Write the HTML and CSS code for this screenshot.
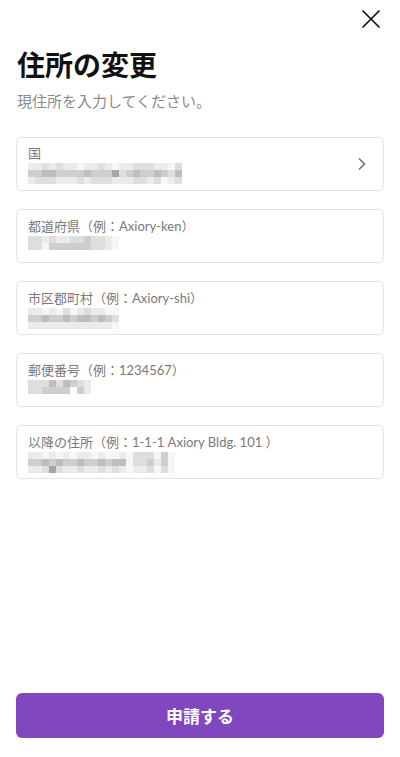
FILE: index.html
```html
<!DOCTYPE html>
<html lang="ja">
<head>
<meta charset="utf-8">
<title>住所の変更</title>
<link rel="stylesheet" href="styles.css">
</head>
<body>
<div class="page">
  <div class="topbar">
    <button class="close" aria-label="閉じる">
      <svg width="20" height="20" viewBox="0 0 20 20"><path d="M2 2 L18 18 M18 2 L2 18" stroke="#111" stroke-width="1.7" fill="none" stroke-linecap="round"/></svg>
    </button>
  </div>
  <h1 class="title">住所の変更</h1>
  <p class="subtitle">現住所を入力してください。</p>

  <div class="fields">
    <div class="field select">
      <div class="field-body">
        <div class="label">国</div>
        <div class="mosaic">
          <div class="mrow"><span class="c1"></span><span class="c1"></span><span class="c2"></span><span class="c1"></span><span class="c2"></span><span class="c1"></span><span class="c1"></span><span class="c0"></span><span class="c1"></span><span class="c1"></span><span class="c2"></span><span class="c1"></span><span class="c0"></span><span class="c1"></span><span class="c1"></span><span class="c2"></span><span class="c2"></span><span class="c2"></span><span class="c1"></span><span class="c1"></span><span class="c0"></span><span class="c2"></span></div>
          <div class="mrow"><span class="c3"></span><span class="c3"></span><span class="c4"></span><span class="c4"></span><span class="c3"></span><span class="c3"></span><span class="c3"></span><span class="c3"></span><span class="c4"></span><span class="c3"></span><span class="c3"></span><span class="c3"></span><span class="c5"></span><span class="c2"></span><span class="c3"></span><span class="c4"></span><span class="c3"></span><span class="c3"></span><span class="c4"></span><span class="c3"></span><span class="c2"></span><span class="c4"></span></div>
          <div class="mrow"><span class="c1"></span><span class="c2"></span><span class="c2"></span><span class="c2"></span><span class="c1"></span><span class="c1"></span><span class="c1"></span><span class="c2"></span><span class="c1"></span><span class="c2"></span><span class="c2"></span><span class="c2"></span><span class="c1"></span><span class="c1"></span><span class="c1"></span><span class="c2"></span><span class="c2"></span><span class="c1"></span><span class="c2"></span><span class="c0"></span><span class="c1"></span><span class="c2"></span></div>
        </div>
      </div>
      <svg class="chev" width="10" height="14" viewBox="0 0 10 14"><path d="M2 1.5 L7.5 7 L2 12.5" stroke="#666" stroke-width="1.4" fill="none"/></svg>
    </div>

    <div class="field">
      <div class="field-body">
        <div class="label">都道府県（例：Axiory-ken）</div>
        <div class="mosaic">
          <div class="mrow"><span class="c2"></span><span class="c2"></span><span class="c1"></span><span class="c2"></span><span class="c1"></span><span class="c1"></span><span class="c2"></span><span class="c2"></span><span class="c3"></span><span class="c2"></span><span class="c2"></span><span class="c1"></span><span class="c0"></span></div>
          <div class="mrow"><span class="c2"></span><span class="c2"></span><span class="c0"></span><span class="c3"></span><span class="c3"></span><span class="c3"></span><span class="c3"></span><span class="c3"></span><span class="c3"></span><span class="c2"></span><span class="c2"></span><span class="c1"></span><span class="c0"></span></div>
        </div>
      </div>
    </div>

    <div class="field">
      <div class="field-body">
        <div class="label">市区郡町村（例：Axiory-shi）</div>
        <div class="mosaic">
          <div class="mrow"><span class="c1"></span><span class="c1"></span><span class="c0"></span><span class="c1"></span><span class="c0"></span><span class="c2"></span><span class="c0"></span><span class="c1"></span><span class="c2"></span><span class="c1"></span><span class="c1"></span><span class="c0"></span><span class="c0"></span></div>
          <div class="mrow"><span class="c3"></span><span class="c3"></span><span class="c4"></span><span class="c3"></span><span class="c3"></span><span class="c4"></span><span class="c3"></span><span class="c4"></span><span class="c4"></span><span class="c3"></span><span class="c4"></span><span class="c3"></span><span class="c2"></span></div>
          <div class="mrow"><span class="c1"></span><span class="c1"></span><span class="c1"></span><span class="c1"></span><span class="c1"></span><span class="c1"></span><span class="c1"></span><span class="c1"></span><span class="c1"></span><span class="c1"></span><span class="c1"></span><span class="c1"></span><span class="c0"></span></div>
        </div>
      </div>
    </div>

    <div class="field">
      <div class="field-body">
        <div class="label">郵便番号（例：1234567）</div>
        <div class="mosaic">
          <div class="mrow"><span class="c2"></span><span class="c2"></span><span class="c2"></span><span class="c4"></span><span class="c2"></span><span class="c4"></span><span class="c3"></span><span class="c2"></span><span class="c1"></span></div>
          <div class="mrow"><span class="c2"></span><span class="c2"></span><span class="c3"></span><span class="c3"></span><span class="c3"></span><span class="c3"></span><span class="w"></span><span class="c3"></span><span class="c1"></span></div>
        </div>
      </div>
    </div>

    <div class="field">
      <div class="field-body">
        <div class="label">以降の住所（例：1-1-1 Axiory Bldg. 101 ）</div>
        <div class="mosaic">
          <div class="mrow"><span class="c1"></span><span class="c1"></span><span class="c0"></span><span class="c1"></span><span class="c0"></span><span class="c1"></span><span class="c0"></span><span class="c1"></span><span class="c1"></span><span class="c0"></span><span class="c1"></span><span class="c0"></span><span class="c0"></span><span class="c1"></span><span class="c0"></span><span class="c2"></span><span class="c2"></span><span class="c2"></span><span class="c0"></span><span class="c3"></span><span class="c0"></span></div>
          <div class="mrow"><span class="c3"></span><span class="c3"></span><span class="c4"></span><span class="c3"></span><span class="c4"></span><span class="c3"></span><span class="c3"></span><span class="c4"></span><span class="c3"></span><span class="c3"></span><span class="c4"></span><span class="c3"></span><span class="c4"></span><span class="c4"></span><span class="c0"></span><span class="c2"></span><span class="c2"></span><span class="c3"></span><span class="c1"></span><span class="c3"></span><span class="c0"></span></div>
          <div class="mrow"><span class="c1"></span><span class="c1"></span><span class="c2"></span><span class="c5"></span><span class="c2"></span><span class="c1"></span><span class="c1"></span><span class="c2"></span><span class="c1"></span><span class="c1"></span><span class="c2"></span><span class="c1"></span><span class="c2"></span><span class="c1"></span><span class="c0"></span><span class="c1"></span><span class="c1"></span><span class="c2"></span><span class="c0"></span><span class="c2"></span><span class="c0"></span></div>
        </div>
      </div>
    </div>
  </div>

  <button class="submit">申請する</button>
</div>
</body>
</html>
```

FILE: styles.css
```css
* { box-sizing: border-box; }
html, body { margin: 0; padding: 0; background: #fff; }
body {
  font-family: Lato, "Noto Sans CJK JP", sans-serif;
  color: #111;
}
.page {
  display: flex;
  flex-direction: column;
  height: 757px;
  padding: 0 16px 19px;
}
.topbar {
  height: 38px;
  display: flex;
  justify-content: flex-end;
  align-items: center;
}
.close {
  border: 0;
  background: none;
  padding: 0;
  margin-right: 3px;
  width: 20px;
  height: 20px;
  display: flex;
}
.title {
  margin: 8px 0 0 1px;
  font-family: "Noto Sans CJK JP", sans-serif;
  font-size: 28px;
  line-height: 36px;
  font-weight: 700;
  color: #111;
}
.subtitle {
  margin: 8px 0 0 1px;
  font-family: "Noto Sans CJK JP", sans-serif;
  font-size: 15px;
  line-height: 22px;
  color: #8a8a8a;
}
.fields {
  margin-top: 25px;
  display: flex;
  flex-direction: column;
  gap: 18px;
}
.field {
  height: 54px;
  border: 1px solid #e3e3e3;
  border-radius: 6px;
  padding: 7px 12px 0 11px;
  display: flex;
  align-items: flex-start;
}
.field-body { flex: 1; }
.label {
  font-size: 13px;
  line-height: 19px;
  color: #7a7a7a;
}
.mosaic { display: flex; flex-direction: column; margin-top: 0; }
.mrow { display: flex; height: 7px; }
.mrow span { width: 7px; height: 7px; }
.c0 { background: #f6f6f6; }
.c1 { background: #ebebeb; }
.c2 { background: #dedede; }
.c3 { background: #cecece; }
.c4 { background: #bdbdbd; }
.c5 { background: #a6a6a6; }
.w { background: #fff; }
.select { align-items: center; padding-top: 0; }
.select .field-body { padding-top: 0; }
.chev { margin-right: 4px; }
.submit {
  margin-top: auto;
  height: 45px;
  width: 100%;
  border: 0;
  border-radius: 6px;
  background: #8147be;
  color: #fff;
  font-family: "Noto Sans CJK JP", sans-serif;
  font-size: 17px;
  font-weight: 700;
}
```
